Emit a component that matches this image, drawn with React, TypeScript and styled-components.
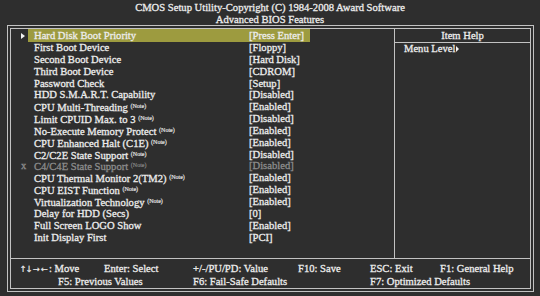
import React from "react";
import styled, { createGlobalStyle } from "styled-components";

const Global = createGlobalStyle`
  html, body { margin: 0; padding: 0; background: #2e2e2e; }
  body {
    width: 540px; height: 296px; overflow: hidden;
    font-family: "Liberation Serif", "Times New Roman", serif;
    font-size: 10.6px; color: #ececec;
  }
`;

const LINE = "#c2c2c2";

const Screen = styled.div`
  width: 540px;
  height: 296px;
  display: flex;
  flex-direction: column;
  background: #2e2e2e;
  -webkit-text-stroke: 0.3px currentColor;
`;

const Title = styled.header`
  height: 25px;
  box-sizing: border-box;
  padding-top: 2px;
  text-align: center;
  line-height: 11.5px;
`;

const Frame = styled.div`
  margin-left: 7px;
  width: 527px;
  height: 267px;
  box-sizing: border-box;
  border: 1px solid ${LINE};
  padding: 2px;
`;

const Inner = styled.div`
  height: 100%;
  box-sizing: border-box;
  border: 1px solid ${LINE};
  display: grid;
  grid-template-rows: 229px 1fr;
`;

const Main = styled.div`
  display: flex;
`;

const List = styled.div`
  width: 383px;
  display: flex;
  flex-direction: column;
`;

const Row = styled.div<{ $first?: boolean; $dim?: boolean }>`
  display: flex;
  align-items: stretch;
  height: ${(p) => (p.$first ? "13px" : "11.85px")};
  line-height: ${(p) => (p.$first ? "13px" : "11.85px")};
  color: ${(p) => (p.$dim ? "#8c8c8c" : "#ececec")};
  white-space: nowrap;
`;

const Marker = styled.span`
  width: 23px;
  box-sizing: border-box;
  padding-left: 10px;
  display: flex;
  align-items: center;
`;

const Pointer = styled.span`
  width: 0;
  height: 0;
  border-left: 4px solid #f2f2f2;
  border-top: 3.5px solid transparent;
  border-bottom: 3.5px solid transparent;
`;

const Content = styled.span<{ $sel?: boolean }>`
  display: inline-flex;
  margin-left: -6px;
  padding: 0 6px;
  background: ${(p) => (p.$sel ? "#9d9b3f" : "transparent")};
`;

const Label = styled.span`
  width: 215px;
`;

const Note = styled.span`
  font-size: 6px;
  vertical-align: 3px;
  -webkit-text-stroke: 0.15px currentColor;
`;

const Value = styled.span``;

const Help = styled.div`
  flex: 1;
  border-left: 1px solid ${LINE};
  display: flex;
  flex-direction: column;
`;

const HelpHead = styled.div`
  height: 13px;
  line-height: 13px;
  border-bottom: 1px solid ${LINE};
  text-align: center;
`;

const HelpBody = styled.div`
  padding: 0 0 0 9px;
  line-height: 12px;
  display: flex;
  align-items: center;
  height: 12px;
`;

const SmallPointer = styled.span`
  display: inline-block;
  width: 0;
  height: 0;
  margin-left: 1px;
  border-left: 3.5px solid #f2f2f2;
  border-top: 3px solid transparent;
  border-bottom: 3px solid transparent;
`;

const Footer = styled.footer`
  border-top: 1px solid ${LINE};
  padding: 4px 0 0 9px;
  display: grid;
  grid-template-columns: 84px 89px 105px 72px 70px 1fr;
  line-height: 12px;
  white-space: nowrap;
`;

const Key = styled.span<{ $span?: string; $indent?: number }>`
  grid-column: ${(p) => p.$span ?? "auto"};
  padding-left: ${(p) => p.$indent ?? 0}px;
`;

const Arrows = styled.span`
  display: inline-flex;
  margin-right: 1px;
  font-family: "DejaVu Sans", sans-serif;
  font-size: 8.5px;
  -webkit-text-stroke: 0.2px currentColor;
`;

const Arrow = styled.span<{ $narrow?: boolean }>`
  display: inline-flex;
  justify-content: center;
  width: ${(p) => (p.$narrow ? "6px" : "8px")};
  overflow: visible;
`;

type Item = { label: string; value: string; note?: boolean; dim?: boolean; sel?: boolean };

const items: Item[] = [
  { label: "Hard Disk Boot Priority", value: "[Press Enter]", sel: true },
  { label: "First Boot Device", value: "[Floppy]" },
  { label: "Second Boot Device", value: "[Hard Disk]" },
  { label: "Third Boot Device", value: "[CDROM]" },
  { label: "Password Check", value: "[Setup]" },
  { label: "HDD S.M.A.R.T. Capability", value: "[Disabled]" },
  { label: "CPU Multi-Threading", value: "[Enabled]", note: true },
  { label: "Limit CPUID Max. to 3", value: "[Disabled]", note: true },
  { label: "No-Execute Memory Protect", value: "[Enabled]", note: true },
  { label: "CPU Enhanced Halt (C1E)", value: "[Enabled]", note: true },
  { label: "C2/C2E State Support", value: "[Disabled]", note: true },
  { label: "C4/C4E State Support", value: "[Disabled]", note: true, dim: true },
  { label: "CPU Thermal Monitor 2(TM2)", value: "[Enabled]", note: true },
  { label: "CPU EIST Function", value: "[Enabled]", note: true },
  { label: "Virtualization Technology", value: "[Enabled]", note: true },
  { label: "Delay for HDD (Secs)", value: "[0]" },
  { label: "Full Screen LOGO Show", value: "[Enabled]" },
  { label: "Init Display First", value: "[PCI]" },
];

export default function App() {
  return (
    <>
      <Global />
      <Screen>
        <Title>
          <div>CMOS Setup Utility-Copyright (C) 1984-2008 Award Software</div>
          <div>Advanced BIOS Features</div>
        </Title>
        <Frame>
          <Inner>
            <Main>
              <List>
                {items.map((it, i) => (
                  <Row key={it.label} $first={i === 0} $dim={it.dim}>
                    <Marker>{it.sel ? <Pointer /> : it.dim ? "x" : null}</Marker>
                    <Content $sel={it.sel}>
                      <Label>
                        {it.label}
                        {it.note ? (
                          <>
                            {" "}
                            <Note>(Note)</Note>
                          </>
                        ) : null}
                      </Label>
                      <Value>{it.value}</Value>
                    </Content>
                  </Row>
                ))}
              </List>
              <Help>
                <HelpHead>Item Help</HelpHead>
                <HelpBody>
                  Menu Level
                  <SmallPointer />
                </HelpBody>
              </Help>
            </Main>
            <Footer>
              <Key>
                <Arrows>
                  <Arrow $narrow>↑</Arrow>
                  <Arrow $narrow>↓</Arrow>
                  <Arrow>→</Arrow>
                  <Arrow>←</Arrow>
                </Arrows>
                : Move
              </Key>
              <Key>Enter: Select</Key>
              <Key>+/-/PU/PD: Value</Key>
              <Key>F10: Save</Key>
              <Key>ESC: Exit</Key>
              <Key>F1: General Help</Key>
              <Key $span="1 / 3" $indent={38}>F5: Previous Values</Key>
              <Key $span="3 / 5">F6: Fail-Safe Defaults</Key>
              <Key $span="5 / 7">F7: Optimized Defaults</Key>
            </Footer>
          </Inner>
        </Frame>
      </Screen>
    </>
  );
}
